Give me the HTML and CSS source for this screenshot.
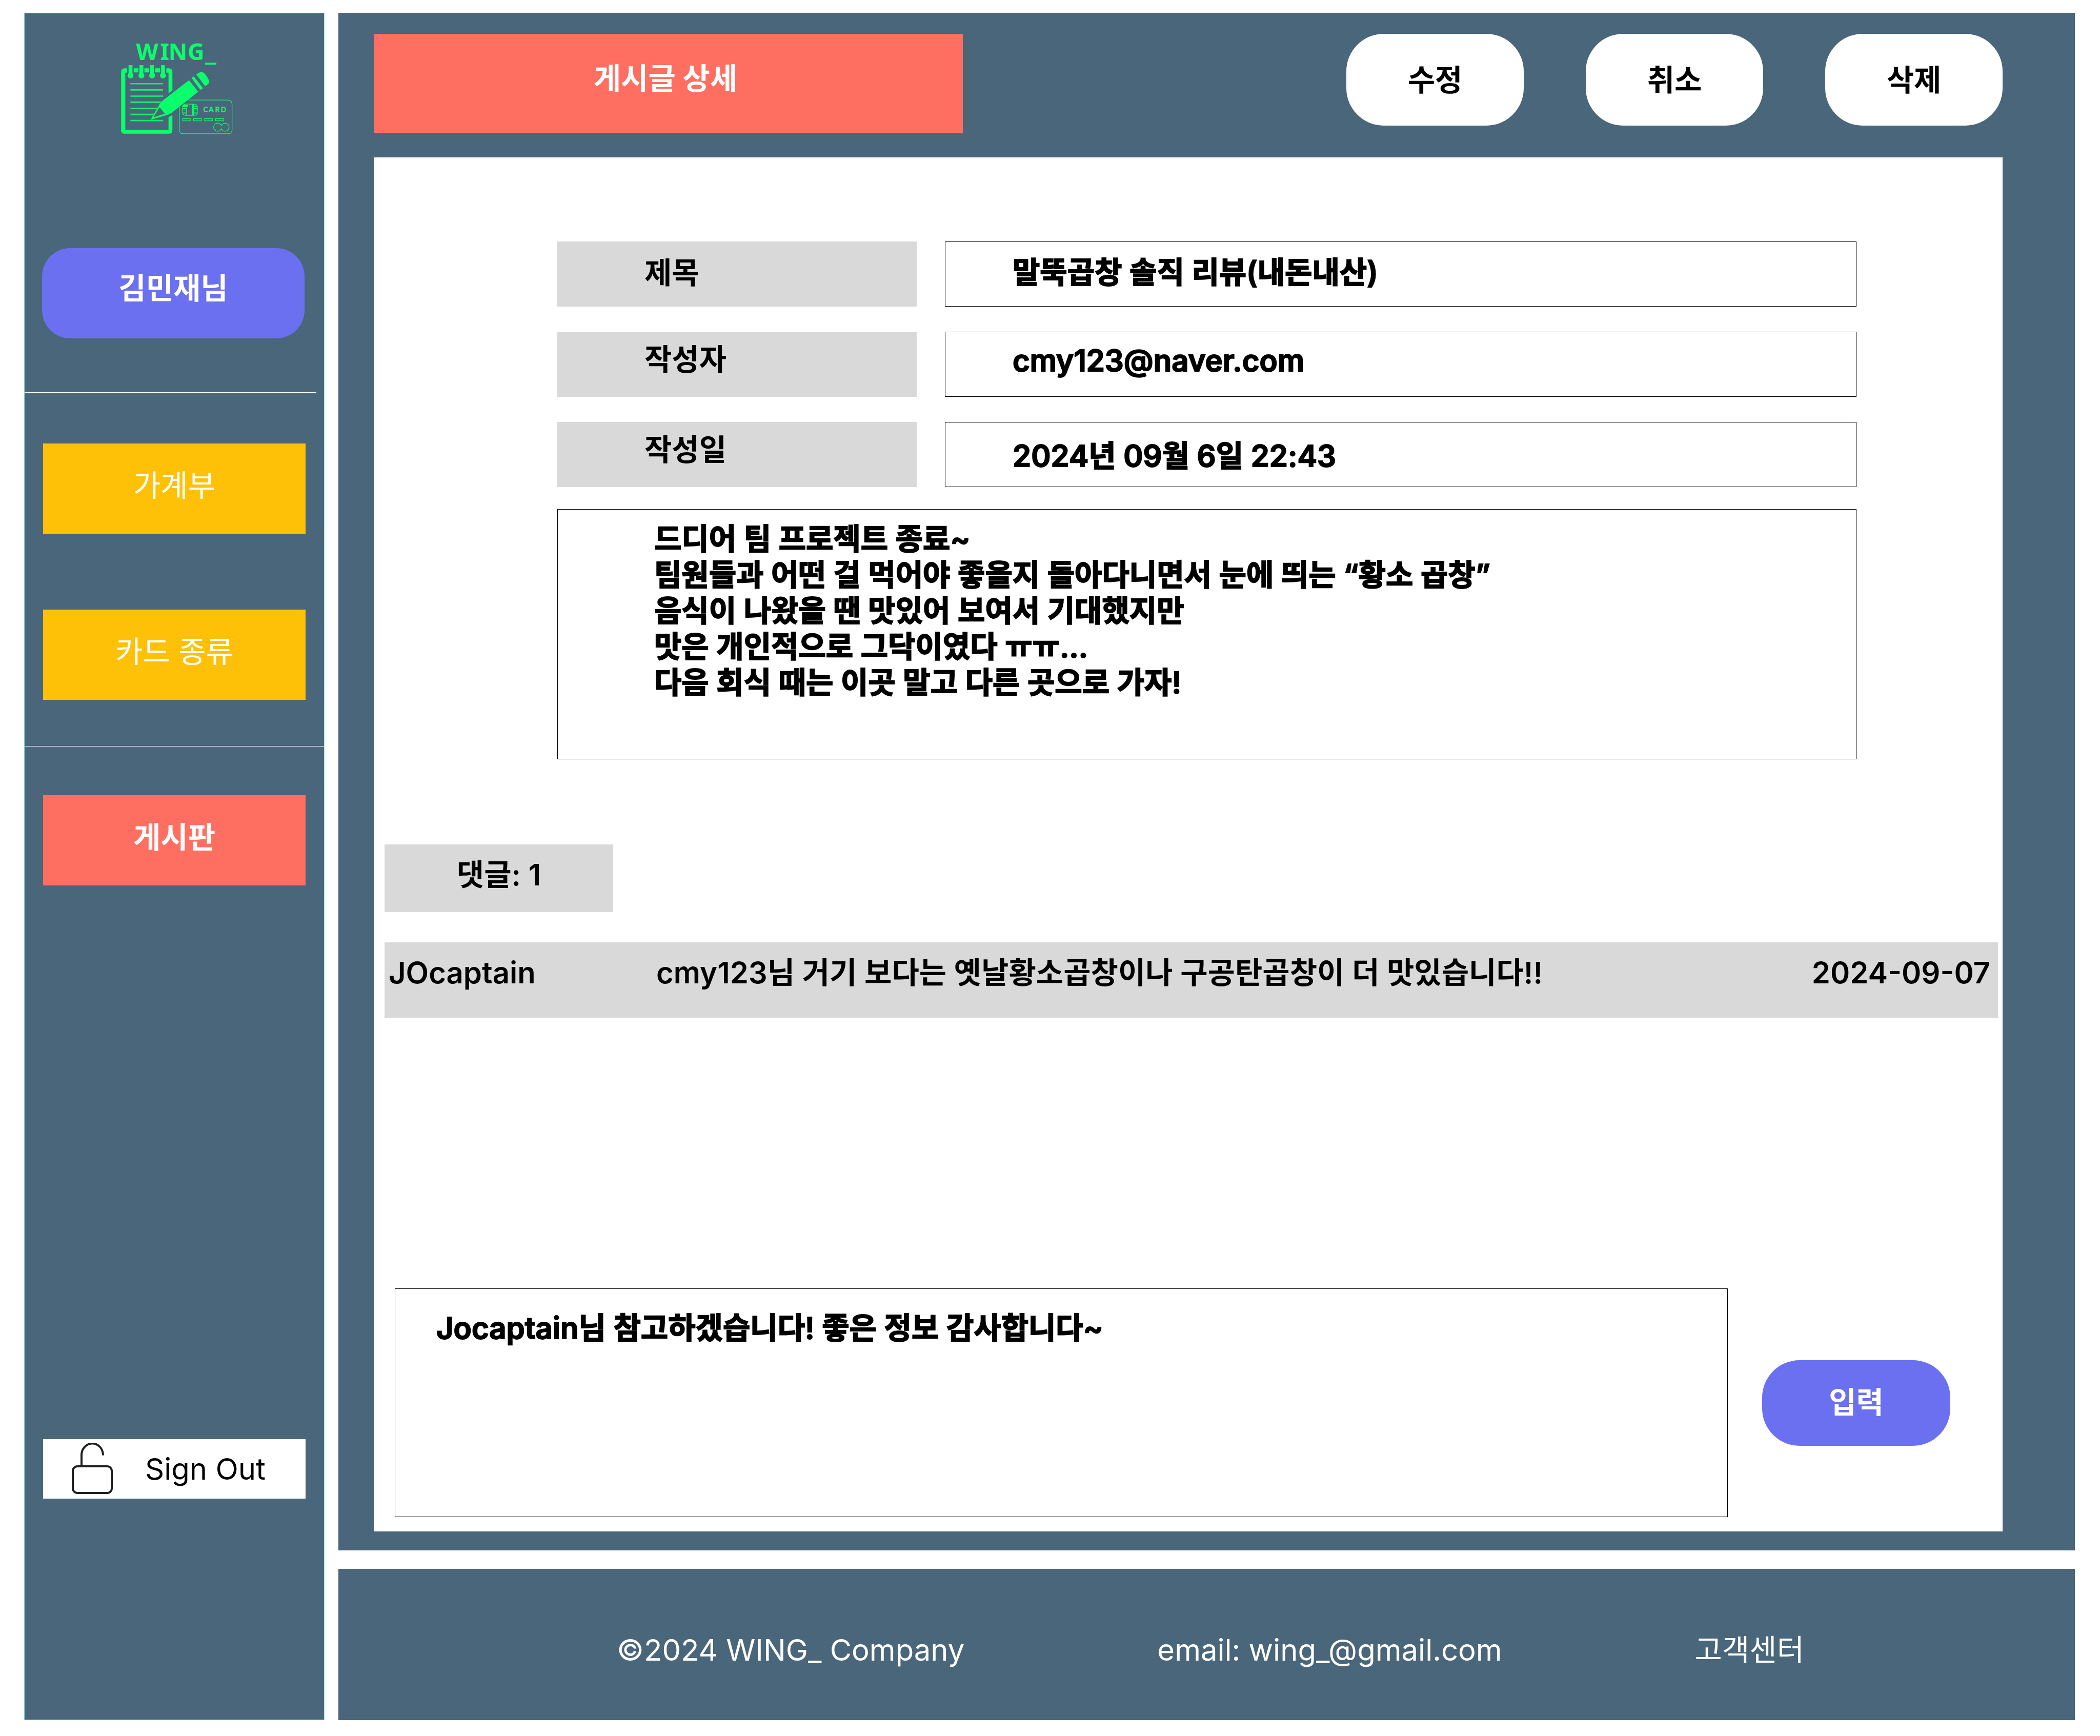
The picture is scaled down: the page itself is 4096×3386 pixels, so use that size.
FILE: index.html
```html
<!DOCTYPE html>
<html lang="ko">
<head>
  <meta charset="utf-8">
  <meta name="viewport" content="width=device-width, initial-scale=1">
  <title>WING_ 게시글 상세</title>
  <link rel="stylesheet" href="styles.css">
</head>
<body>
  <div class="page">
    <aside class="sidebar">
      <a class="logo" href="#" aria-label="WING_">
        <svg class="logo-art" viewBox="-16 0 960 780" fill="none">
          <g class="logo-fill">
            <text class="logo-word" x="217 372 425 548 660" y="205">WING<tspan class="logo-bar">_</tspan></text>
            <path d="M159 257H142Q120 259 120 280V656Q120 678 142 678H428Q450 678 450 656V558L425 571V652H147V285H159Z"/>
            <path d="M411 257H428Q450 259 450 280V400L425 417V285H411Z"/>
            <path d="M201 257h30v27h-30zM270 257h30v27h-30zM340 257h30v27h-30z"/>
            <path d="M168 237h25v52a19 19 0 1 1-25 0zM238 237h25v52a19 19 0 1 1-25 0zM307 237h25v52a19 19 0 1 1-25 0zM377 237h25v52a19 19 0 1 1-25 0z"/>
            <path d="M180 352h210v8H180zM180 392h210v9H180zM180 432h210v8H180zM180 471h198l-8 9H180zM180 510h175l-4 9H180zM180 549h152l-5 9H180zM180 589h210v9H180z"/>
            <path fill-rule="evenodd" d="M557 334L616 408L445 543Q436 551 422 556L309 589L362 498Q370 478 388 464ZM368 507L328 572L401 549Z"/>
            <path d="M573 320L588 309L647 385L631 397Z"/>
            <path d="M604 298L618 287Q637 274 654 288Q672 307 685 333Q690 345 681 357L661 373Z"/>
          </g>
          <g class="logo-line">
            <path d="M552 461H808Q834 463 834 488V652Q834 678 808 678H520Q495 678 495 652V503"/>
            <path d="M534 488H592Q611 491 611 508V540Q611 558 592 560H534Q515 558 515 540V508Q515 491 534 488Z"/>
            <path d="M541 510V558M580 488V558M586 488V558M515 516H541M515 526H541M515 540H541M515 550H541M586 502H611M586 515H611M586 526H611M586 540H611M586 550H611"/>
            <path d="M515 500H551" stroke-width="13"/>
            <path d="M515 581h50v14h-50zM586 581h51v14h-51zM657 581h51v14h-51zM728 581h51v14h-51z"/>
            <path d="M765 625A26 26 0 1 0 765 647M765 625A26 26 0 1 1 765 647M765 619V629M765 643V653"/>
          </g>
          <text class="logo-card" x="649 683 725 761" y="541">CARD</text>
        </svg>
      </a>
      <button class="user" type="button">김민재님</button>
      <hr class="rule rule-short">
      <nav class="menu">
        <a class="menu-item" href="#">가계부</a>
        <a class="menu-item" href="#">카드 종류</a>
      </nav>
      <hr class="rule">
      <nav class="menu menu-board">
        <a class="menu-item menu-item-active" href="#" aria-current="page">게시판</a>
      </nav>
      <button class="sign-out" type="button">
        <svg class="lock" viewBox="0 0 80 99" fill="none" stroke="#1e1e1e" stroke-width="4">
          <rect x="2" y="45" width="76" height="52" rx="9"/>
          <path d="M19 45V25A21 23 0 0 1 61 22" stroke-linecap="round"/>
        </svg>
        Sign Out
      </button>
    </aside>

    <main class="board">
      <header class="board-head">
        <h1 class="board-title">게시글 상세</h1>
        <div class="actions">
          <button class="action" type="button">수정</button>
          <button class="action" type="button">취소</button>
          <button class="action" type="button">삭제</button>
        </div>
      </header>

      <div class="panel">
        <section class="post">
          <div class="field">
            <label class="field-label field-label-title" for="title">제목</label>
            <input class="field-value" id="title" type="text" readonly value="말뚝곱창 솔직 리뷰(내돈내산)">
          </div>
          <div class="field">
            <label class="field-label" for="author">작성자</label>
            <input class="field-value" id="author" type="text" readonly value="cmy123@naver.com">
          </div>
          <div class="field">
            <label class="field-label" for="date">작성일</label>
            <input class="field-value field-value-date" id="date" type="text" readonly value="2024년 09월 6일 22:43">
          </div>
          <textarea class="post-body" rows="5" readonly aria-label="내용">드디어 팀 프로젝트 종료~
팀원들과 어떤 걸 먹어야 좋을지 돌아다니면서 눈에 띄는 “황소 곱창”
음식이 나왔을 땐 맛있어 보여서 기대했지만
맛은 개인적으로 그닥이였다 ㅠㅠ...
다음 회식 때는 이곳 말고 다른 곳으로 가자!</textarea>
        </section>

        <section class="comments">
          <h2 class="comment-count">댓글: 1</h2>
          <article class="comment">
            <span class="comment-author">JOcaptain</span>
            <p class="comment-text">cmy123님 거기 보다는 옛날황소곱창이나 구공탄곱창이 더 맛있습니다!!</p>
            <time class="comment-date" datetime="2024-09-07">2024-09-07</time>
          </article>
        </section>

        <form class="reply">
          <textarea class="reply-text" rows="5" aria-label="댓글 입력">Jocaptain님 참고하겠습니다! 좋은 정보 감사합니다~</textarea>
          <button class="reply-send" type="button">입력</button>
        </form>
      </div>
    </main>

    <footer class="footer">
      <span>©2024 WING_ Company</span>
      <span>email: wing_@gmail.com</span>
      <a class="footer-link" href="#">고객센터</a>
    </footer>
  </div>
</body>
</html>
```

FILE: styles.css
```css
:root {
  --slate: #4a667a;
  --coral: #ff6f61;
  --amber: #ffc107;
  --violet: #6b70f0;
  --grey: #d9d9d9;
  --green: #0aff6c;
}

* {
  box-sizing: border-box;
}

body {
  margin: 0;
  background: #fff;
  color: #000;
}

body,
button,
input,
textarea {
  font-family: Inter, "Noto Sans CJK KR", sans-serif;
  font-size: 58px;
  line-height: 70px;
}

button,
input,
textarea {
  margin: 0;
  border: 0;
  border-radius: 0;
  color: inherit;
}

h1,
h2,
p {
  margin: 0;
  font-size: inherit;
}

a {
  color: inherit;
  text-decoration: none;
}

.page {
  display: grid;
  grid-template-columns: 586px minmax(0, 1fr);
  grid-template-rows: 1fr auto;
  gap: 36px 27px;
  min-height: 100vh;
  padding: 25px 49px 31px 47px;
}

/* Sidebar */
.sidebar {
  grid-row: 1 / 3;
  display: flex;
  flex-direction: column;
  padding: 29px 0 0;
  border: 1px solid #7fe8d8;
  background: var(--slate);
}

.logo {
  display: block;
  width: 291px;
  margin: 0 auto 192px;
}

.logo-art {
  display: block;
  width: 291px;
  height: 237px;
}

.logo-fill,
.logo-card {
  fill: var(--green);
}

.logo-word {
  font: 700 148px "Noto Sans", sans-serif;
}

.logo-bar {
  font-size: 176px;
}

.logo-card {
  font: 900 47px Lato, sans-serif;
}

.logo-line {
  stroke: var(--green);
  stroke-width: 4px;
}

.user {
  margin: 0 38px 0 34px;
  padding: 43px 0 63px;
  border-radius: 55px;
  background: var(--violet);
  color: #fff;
  font-weight: 700;
}

.rule {
  width: 100%;
  height: 1px;
  margin: 90px 0 0;
  border: 0;
  background: #fff;
}

.rule-short {
  width: 569px;
  margin-top: 105px;
}

.menu {
  display: flex;
  flex-direction: column;
  gap: 148px;
  margin: 99px 36px 0;
}

.menu-board {
  margin-top: 95px;
}

.menu-item {
  padding: 47px 0 59px;
  background: var(--amber);
  color: #fff;
  text-align: center;
}

.menu-item-active {
  background: var(--coral);
  font-weight: 700;
}

.sign-out {
  display: flex;
  align-items: center;
  gap: 63px;
  margin: auto 36px 431px;
  padding: 8px 56px 9px;
  background: #fff;
}

.lock {
  width: 80px;
  height: 99px;
}

/* Board */
.board {
  display: flex;
  flex-direction: column;
  gap: 47px;
  padding: 41px 141px 37px 70px;
  background: var(--slate);
}

.board-head {
  display: flex;
  justify-content: space-between;
  align-items: flex-start;
}

.board-title {
  width: 1148px;
  padding: 52px 12px 72px 0;
  background: var(--coral);
  color: #fff;
  font-weight: 700;
  text-align: center;
}

.actions {
  display: flex;
  gap: 121px;
}

.action {
  width: 346px;
  padding: 55px 0 54px;
  border-radius: 73px;
  background: #fff;
  font-weight: 700;
}

.panel {
  flex: 1;
  display: flex;
  flex-direction: column;
  padding: 164px 0 28px;
  background: #fff;
}

.post {
  display: flex;
  flex-direction: column;
  gap: 49px;
  margin: 0 285px 0 357px;
}

.field {
  display: grid;
  grid-template-columns: 701px minmax(0, 1fr);
  gap: 55px;
}

.field-label {
  padding: 19px 170px 38px;
  background: var(--grey);
  font-weight: 700;
}

.field-label-title {
  padding-top: 26px;
  padding-bottom: 31px;
}

.field-value,
.post-body,
.reply-text {
  border: 1px solid #000;
  background: #fff;
  font-weight: 600;
  -webkit-text-stroke: 2px #000;
}

.field-value {
  width: 100%;
  height: 127px;
  padding: 20px 131px 35px;
}

.field-value-date {
  padding-top: 26px;
  padding-bottom: 29px;
}

.post-body,
.reply-text {
  display: block;
  resize: none;
  overflow: hidden;
}

.post-body {
  width: 100%;
  margin-top: -6px;
  padding: 22px 188px 114px;
}

.comments {
  margin: 166px 9px 0 20px;
}

.comment-count {
  width: 446px;
  padding: 24px 0 38px;
  background: var(--grey);
  font-weight: 600;
  text-align: center;
}

.comment {
  display: grid;
  grid-template-columns: 522px minmax(0, 1fr) auto;
  margin-top: 59px;
  padding: 24px 15px 53px 8px;
  background: var(--grey);
  font-weight: 600;
}

.reply {
  display: flex;
  align-items: center;
  gap: 67px;
  margin: auto 102px 0 40px;
}

.reply-text {
  flex: 1;
  padding: 41px 80px 53px;
}

.reply-send {
  width: 367px;
  padding: 47px 0 50px;
  border-radius: 73px;
  background: var(--violet);
  color: #fff;
  font-weight: 700;
}

/* Footer */
.footer {
  display: flex;
  gap: 376px;
  padding: 123px 0 102px 543px;
  background: var(--slate);
  color: #fff;
}
```
